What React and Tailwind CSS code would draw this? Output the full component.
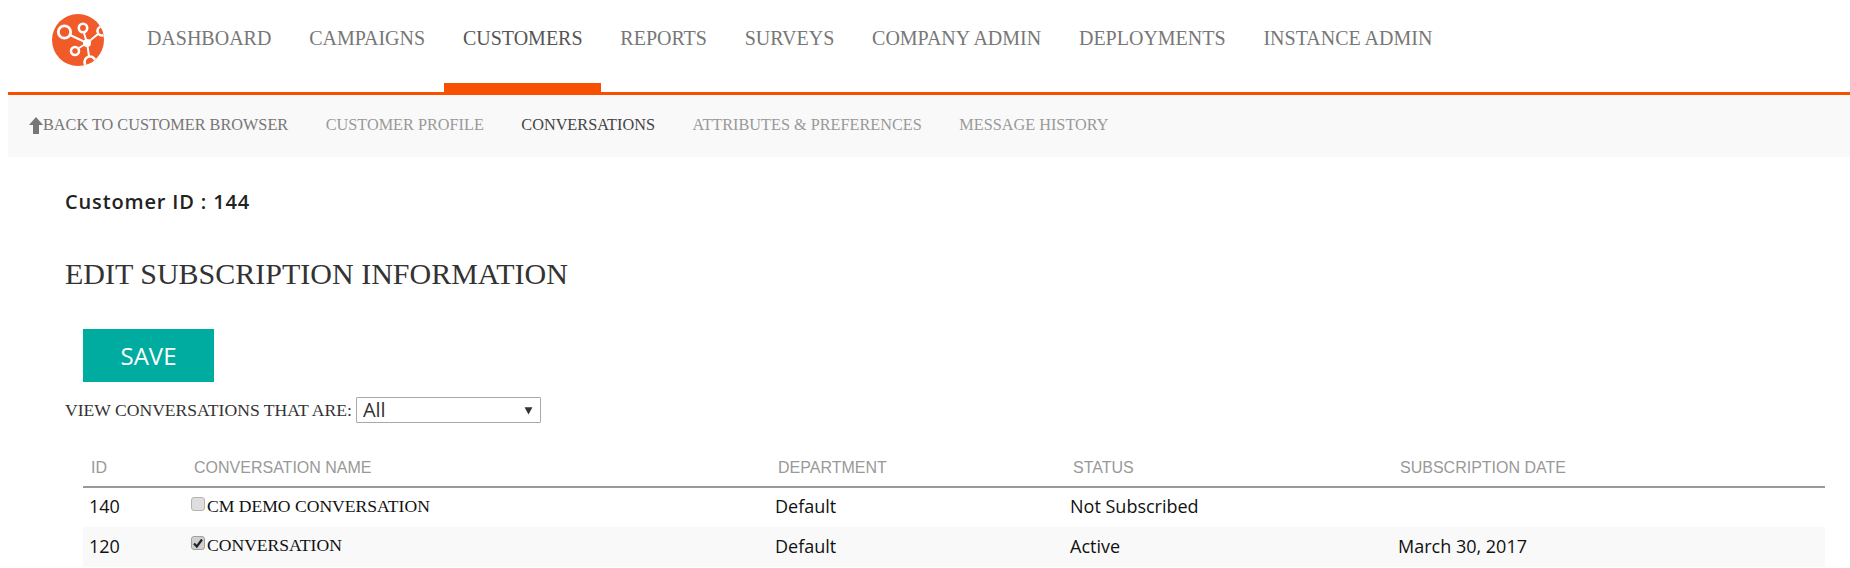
import { useState } from 'react'

const navItems = ['DASHBOARD', 'CAMPAIGNS', 'CUSTOMERS', 'REPORTS', 'SURVEYS', 'COMPANY ADMIN', 'DEPLOYMENTS', 'INSTANCE ADMIN']

const rows = [
  { id: 140, name: 'CM DEMO CONVERSATION', dept: 'Default', status: 'Not Subscribed', date: '', checked: false },
  { id: 120, name: 'CONVERSATION', dept: 'Default', status: 'Active', date: 'March 30, 2017', checked: true },
]

const Logo = () => (
  <svg viewBox="0 0 52 52" className="w-[52px] h-[52px] shrink-0">
    <defs>
      <clipPath id="logo-clip"><circle cx="26" cy="26" r="26" /></clipPath>
    </defs>
    <circle cx="26" cy="26" r="26" fill="#f15a29" />
    <g clipPath="url(#logo-clip)" stroke="#fff" fill="none">
      <path d="M35 29 L18 21 M35 29 L32 19 M35 29 L46 20 M35 29 L27 34 M35 29 L37 42" strokeWidth="2" />
      <circle cx="12.5" cy="18" r="6.2" strokeWidth="2.8" fill="#f15a29" />
      <circle cx="31" cy="14" r="4.2" strokeWidth="2.6" fill="#f15a29" />
      <circle cx="50" cy="17" r="4.5" strokeWidth="2.6" fill="#f15a29" />
      <circle cx="23" cy="37" r="4" strokeWidth="2.6" fill="#f15a29" />
      <circle cx="38" cy="48" r="5.5" strokeWidth="2.6" fill="#f15a29" />
      <circle cx="35" cy="29" r="4" fill="#fff" stroke="none" />
    </g>
  </svg>
)

const Checkbox = ({ checked }) => (
  <span className="relative mr-[2px] mb-[4px] w-[14px] h-[14px] shrink-0">
    <input
      type="checkbox"
      defaultChecked={checked}
      className="peer block w-[14px] h-[14px] appearance-none bg-[#dedede] border border-[#b4b4b4] rounded-[3px] checked:bg-[#d0d0d0] checked:border-[#a0a0a0]"
    />
    <svg viewBox="0 0 14 14" className="absolute left-0 top-0 w-[14px] h-[14px] hidden peer-checked:block pointer-events-none">
      <path d="M3 7.5 L5.8 10.5 L11 3.5" fill="none" stroke="#222" strokeWidth="2.2" />
    </svg>
  </span>
)

const App = () => {
  const [filter, setFilter] = useState('All')

  return (
    <div className="ml-2 h-[568px] overflow-hidden bg-white font-['Liberation_Serif',serif]">
      {/* Main nav */}
      <header className="h-[92px] pl-[44px] flex items-start">
        <div className="mt-[14px] mr-[24px]">
          <Logo />
        </div>
        <nav className="flex">
          {navItems.map((item) => (
            <a
              key={item}
              href="#"
              className={`h-[92px] px-[18.9px] pt-[26px] text-[20px] leading-[24px] border-b-[9px] ${
                item === 'CUSTOMERS' ? 'border-[#f94f00] text-[#555]' : 'border-transparent text-[#777]'
              }`}
            >
              {item}
            </a>
          ))}
        </nav>
      </header>
      <div className="h-[3px] bg-[#f94f00]"></div>

      {/* Sub nav */}
      <div className="h-[62px] pl-[21px] pb-[2px] bg-[#f9f9f9] flex items-center gap-[37.5px] text-[16.25px]">
        <a href="#" className="flex items-center text-[#777]">
          <svg viewBox="0 0 14 17" className="w-[14px] h-[17px]">
            <path d="M7 0 L14 8 L10 8 L10 17 L4 17 L4 8 L0 8 Z" fill="#777" />
          </svg>
          BACK TO CUSTOMER BROWSER
        </a>
        <a href="#" className="text-[#999]">CUSTOMER PROFILE</a>
        <a href="#" className="text-[#444]">CONVERSATIONS</a>
        <a href="#" className="text-[#999]">ATTRIBUTES &amp; PREFERENCES</a>
        <a href="#" className="text-[#999]">MESSAGE HISTORY</a>
      </div>

      {/* Content */}
      <main className="pl-[57px] pr-[25px]">
        <p className="mt-[33px] font-['Open_Sans',sans-serif] font-semibold text-[20px] leading-[24px] tracking-[0.85px] text-[#222]">
          Customer ID : 144
        </p>
        <h1 className="mt-[42px] text-[30px] leading-[36px] text-[#333]">EDIT SUBSCRIPTION INFORMATION</h1>

        <button className="block mt-[37px] ml-[18px] w-[131px] h-[53px] bg-[#00ab9f] text-white font-['Open_Sans',sans-serif] font-medium text-[24px]">
          SAVE
        </button>

        <div className="mt-[15px] flex items-center gap-[4px] text-[17.6px] text-[#333]">
          <label>VIEW CONVERSATIONS THAT ARE:</label>
          <div className="relative">
            <select
              value={filter}
              onChange={(e) => setFilter(e.target.value)}
              className="block w-[185px] h-[26px] pl-[6px] appearance-none bg-white border border-[#a9a9a9] rounded-[1px] font-['Open_Sans',sans-serif] text-[20px] leading-[24px] text-[#333]"
            >
              <option>All</option>
              <option>Active</option>
              <option>Not Subscribed</option>
            </select>
            <svg viewBox="0 0 8 8" className="absolute right-[8px] top-[9px] w-[9px] h-[9px] pointer-events-none">
              <path d="M0.5 1 L7.5 1 L4 7.5 Z" fill="#333" />
            </svg>
          </div>
        </div>

        {/* Table */}
        <table className="mt-[28px] ml-[18px] w-[1742px] table-fixed border-collapse">
          <colgroup>
            <col className="w-[102px]" />
            <col className="w-[584px]" />
            <col className="w-[295px]" />
            <col className="w-[328px]" />
            <col className="w-[433px]" />
          </colgroup>
          <thead>
            <tr className="h-[36px] border-b-2 border-[#999] font-['Liberation_Sans',sans-serif] text-[16px] text-[#999] text-left">
              <th className="pl-[8px] pb-[2px] font-normal">ID</th>
              <th className="pl-[9px] pb-[2px] font-normal">CONVERSATION NAME</th>
              <th className="pl-[9px] pb-[2px] font-normal">DEPARTMENT</th>
              <th className="pl-[9px] pb-[2px] font-normal">STATUS</th>
              <th className="pl-[8px] pb-[2px] font-normal">SUBSCRIPTION DATE</th>
            </tr>
          </thead>
          <tbody className="font-['Open_Sans',sans-serif] text-[18px] text-[#111]">
            {rows.map((row, i) => (
              <tr key={row.id} className={`h-[40px] ${i % 2 === 1 ? 'bg-[#f9f9f9]' : ''}`}>
                <td className="pl-[6px] pb-[2px]">{row.id}</td>
                <td className="pl-[6px] pb-[4px]">
                  <label className="flex items-center font-['Liberation_Serif',serif] text-[17.6px] text-[#111]">
                    <Checkbox checked={row.checked} />
                    {row.name}
                  </label>
                </td>
                <td className="pl-[6px] pb-[2px]">{row.dept}</td>
                <td className="pl-[6px] pb-[2px]">{row.status}</td>
                <td className="pl-[6px] pb-[2px]">{row.date}</td>
              </tr>
            ))}
          </tbody>
        </table>
      </main>
    </div>
  )
}

export default App
